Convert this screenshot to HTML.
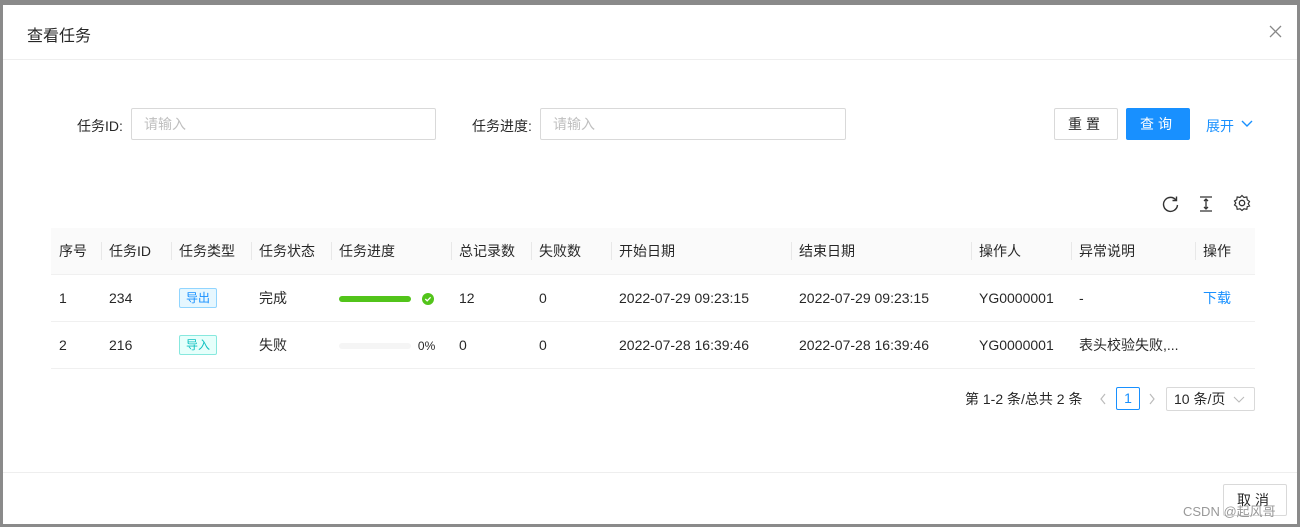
<!DOCTYPE html>
<html><head><meta charset="utf-8"><style>
*{box-sizing:border-box;margin:0;padding:0}
body{width:1300px;height:527px;background:#8a8a8a;font-family:"Liberation Sans","Noto Sans CJK SC",sans-serif;font-size:14px;color:rgba(0,0,0,.85);position:relative;overflow:hidden}
.m{position:absolute;left:3px;top:5px;width:1294px;height:519px;background:#fff}
.a{position:absolute}
.hd{left:0;top:0;width:100%;height:55px;border-bottom:1px solid #eee}
.inp{border:1px solid #d9d9d9;border-radius:2px;height:32px;padding:0 12px;line-height:30px;color:#bfbfbf}
.btn{border:1px solid #d9d9d9;border-radius:2px;height:32px;line-height:30px;text-align:center;letter-spacing:4px}
table{position:absolute;left:48px;top:223px;width:1204px;border-collapse:collapse}
th{background:#fafafa;font-weight:normal;height:46px;text-align:left;padding-left:8px;position:relative;border-bottom:1px solid #f0f0f0}
th+th:before{content:"";position:absolute;left:0;top:14px;height:18px;border-left:1px solid #e8e8e8}
td{height:47px;padding-left:8px;border-bottom:1px solid #f0f0f0}
.tag{display:inline-block;border:1px solid;border-radius:2px;font-size:12px;padding:0 6px;line-height:18px}
</style></head><body>
<div class="m">
<div class="a hd"><span class="a" style="left:24px;top:17px;font-size:16px">查看任务</span>
<svg class="a" style="left:1266px;top:20px" width="13" height="13" viewBox="0 0 13 13"><path d="M1 1L12 12M12 1L1 12" stroke="#888" stroke-width="1.3"/></svg></div>
<span class="a" style="left:74px;top:111px">任务ID:</span>
<div class="a inp" style="left:128px;top:103px;width:305px">请输入</div>
<span class="a" style="left:469px;top:111px">任务进度:</span>
<div class="a inp" style="left:537px;top:103px;width:306px">请输入</div>
<div class="a btn" style="left:1051px;top:103px;width:64px">重置</div>
<div class="a btn" style="left:1123px;top:103px;width:64px;background:#1890ff;border-color:#1890ff;color:#fff">查询</div>
<span class="a" style="left:1203px;top:111px;color:#1890ff">展开</span>
<svg class="a" style="left:1238px;top:114px" width="12" height="10"><path d="M1 2L6 7L11 2" stroke="#1890ff" fill="none" stroke-width="1.4"/></svg>
<svg class="a" style="left:1159px;top:190px" width="18" height="18" viewBox="0 0 18 18"><path d="M14 5A7 7 0 1 0 15.5 10" stroke="#333" fill="none" stroke-width="1.4"/><path d="M14.5 1.5V5.5H10.5" stroke="#333" fill="none" stroke-width="1.4"/></svg>
<svg class="a" style="left:1196px;top:190px" width="14" height="18"><path d="M1 2H13M1 16H13M7 4V14M5 6L7 4L9 6M5 12L7 14L9 12" stroke="#333" fill="none" stroke-width="1.3"/></svg>
<svg class="a" style="left:1230px;top:189px" width="18" height="18" viewBox="0 0 18 18"><circle cx="9" cy="9" r="2.7" stroke="#333" fill="none" stroke-width="1.3"/><path d="M9 1.5L11 3.5L13.8 3L14.3 5.8L16.5 7.5L15.2 9.8L16.5 12L14.3 12.5L13.8 15.3L11 14.8L9 16.5L7 14.8L4.2 15.3L3.7 12.5L1.5 11L2.8 9L1.5 7L3.7 5.8L4.2 3L7 3.5Z" stroke="#333" fill="none" stroke-width="1.2"/></svg>
<table>
<tr><th style="width:50px">序号</th><th style="width:70px">任务ID</th><th style="width:80px">任务类型</th><th style="width:80px">任务状态</th><th style="width:120px">任务进度</th><th style="width:80px">总记录数</th><th style="width:80px">失败数</th><th style="width:180px">开始日期</th><th style="width:180px">结束日期</th><th style="width:100px">操作人</th><th style="width:124px">异常说明</th><th>操作</th></tr>
<tr><td>1</td><td>234</td><td><span class="tag" style="color:#1890ff;background:#e6f7ff;border-color:#91d5ff">导出</span></td><td>完成</td><td><span style="display:inline-block;width:72px;height:6px;border-radius:3px;background:#52c41a;vertical-align:middle"></span> <svg width="14" height="14" style="vertical-align:middle;margin-left:6px"><circle cx="7" cy="7" r="6" fill="#52c41a"/><path d="M4.3 7L6.2 8.8L9.6 5.3" stroke="#fff" fill="none" stroke-width="1.3"/></svg></td><td>12</td><td>0</td><td>2022-07-29 09:23:15</td><td>2022-07-29 09:23:15</td><td>YG0000001</td><td>-</td><td style="color:#1890ff">下载</td></tr>
<tr><td>2</td><td>216</td><td><span class="tag" style="color:#13c2c2;background:#e6fffb;border-color:#87e8de">导入</span></td><td>失败</td><td><span style="display:inline-block;width:72px;height:6px;border-radius:3px;background:#f5f5f5;vertical-align:middle"></span> <span style="font-size:12px;margin-left:3px;vertical-align:middle">0%</span></td><td>0</td><td>0</td><td>2022-07-28 16:39:46</td><td>2022-07-28 16:39:46</td><td>YG0000001</td><td>表头校验失败,...</td><td></td></tr>
</table>
<span class="a" style="left:962px;top:384px">第 1-2 条/总共 2 条</span>
<svg class="a" style="left:1096px;top:388px" width="8" height="12"><path d="M6 1L2 6L6 11" stroke="#bbb" fill="none" stroke-width="1.2"/></svg>
<div class="a" style="left:1113px;top:382px;width:24px;height:23px;border:1px solid #1890ff;border-radius:2px;color:#1890ff;text-align:center;line-height:21px">1</div>
<svg class="a" style="left:1145px;top:388px" width="8" height="12"><path d="M2 1L6 6L2 11" stroke="#bbb" fill="none" stroke-width="1.2"/></svg>
<div class="a" style="left:1163px;top:382px;width:89px;height:24px;border:1px solid #d9d9d9;border-radius:2px;padding-left:7px;line-height:22px">10 条/页 <svg width="12" height="8" style="margin-left:4px"><path d="M1 1L6 6L11 1" stroke="#bbb" fill="none" stroke-width="1.1"/></svg></div>
<div class="a" style="left:0;top:467px;width:100%;border-top:1px solid #eee"></div>
<div class="a btn" style="left:1220px;top:479px;width:64px;background:#fff">取消</div>
<span class="a" style="left:1180px;top:496px;color:#999;font-size:13px">CSDN @起风哥</span>
</div>
</body></html>
